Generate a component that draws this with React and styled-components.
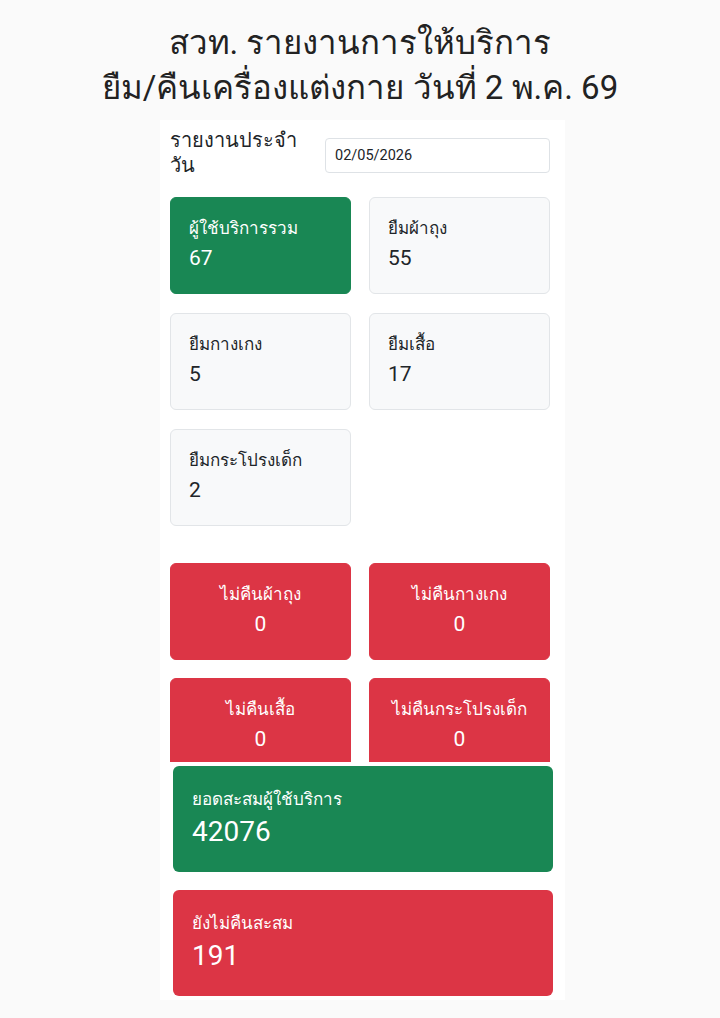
import React from "react";
import styled, { createGlobalStyle } from "styled-components";

const Global = createGlobalStyle`
  html, body { margin: 0; padding: 0; background: #fafafa; }
  body { font-family: Roboto, "Noto Sans", "DejaVu Sans", sans-serif; color: #212529; }
  * { box-sizing: border-box; }
`;

const Page = styled.div`
  width: 720px;
  min-height: 1018px;
  padding-top: 20px;
`;

const Title = styled.h1`
  margin: 0 0 10px;
  text-align: center;
  font-weight: 400;
  font-size: 33px;
  line-height: 45px;
  color: #222;
`;

const Panel = styled.div`
  width: 405px;
  margin-left: 160px;
  background: #fff;
`;

const TopSection = styled.div`
  height: 642px;
  overflow: hidden;
  padding: 5px 15px 0 10px;
`;

const HeaderRow = styled.div`
  display: flex;
  align-items: center;
  justify-content: space-between;
  height: 55px;
`;

const HeaderLabel = styled.div`
  font-size: 20px;
  line-height: 25px;
  color: #212529;
`;

const DateInput = styled.div`
  width: 225px;
  height: 35px;
  margin-top: 6px;
  border: 1px solid #dee2e6;
  border-radius: 4px;
  padding: 0 9px;
  display: flex;
  align-items: center;
  font-size: 14.5px;
  color: #212529;
`;

const Grid = styled.div`
  display: grid;
  grid-template-columns: 181px 181px;
  column-gap: 18px;
  row-gap: ${(p) => p.$rowGap || 19}px;
  margin-top: ${(p) => p.$top || 0}px;
`;

const variants = {
  success: { bg: "#198754", fg: "#fff", border: "#198754" },
  light: { bg: "#f8f9fa", fg: "#212529", border: "#e2e5e8" },
  danger: { bg: "#dc3545", fg: "#fff", border: "#dc3545" },
};

const Card = styled.div`
  height: 97px;
  border-radius: 6px;
  background: ${(p) => variants[p.$v].bg};
  color: ${(p) => variants[p.$v].fg};
  border: 1px solid ${(p) => variants[p.$v].border};
  padding: 16px ${(p) => (p.$center ? 4 : 18)}px 0;
  text-align: ${(p) => (p.$center ? "center" : "left")};
`;

const CardLabel = styled.div`
  font-size: 17px;
  line-height: 28px;
`;

const CardValue = styled.div`
  font-size: 21px;
  line-height: 32px;
`;

const BottomSection = styled.div`
  padding: 4px 12px 4px 13px;
  display: flex;
  flex-direction: column;
  gap: 18px;
`;

const BigCard = styled.div`
  height: 106px;
  border-radius: 6px;
  background: ${(p) => variants[p.$v].bg};
  color: #fff;
  padding: 20px 19px 0;
`;

const BigLabel = styled.div`
  font-size: 17px;
  line-height: 26px;
`;

const BigValue = styled.div`
  font-size: 28px;
  line-height: 40px;
`;

const stats = [
  { v: "success", label: "ผู้ใช้บริการรวม", value: 67 },
  { v: "light", label: "ยืมผ้าถุง", value: 55 },
  { v: "light", label: "ยืมกางเกง", value: 5 },
  { v: "light", label: "ยืมเสื้อ", value: 17 },
  { v: "light", label: "ยืมกระโปรงเด็ก", value: 2 },
];

const notReturned = [
  { label: "ไม่คืนผ้าถุง", value: 0 },
  { label: "ไม่คืนกางเกง", value: 0 },
  { label: "ไม่คืนเสื้อ", value: 0 },
  { label: "ไม่คืนกระโปรงเด็ก", value: 0 },
];

export default function App() {
  return (
    <Page>
      <Global />
      <Title>
        สวท. รายงานการให้บริการ
        <br />
        ยืม/คืนเครื่องแต่งกาย วันที่ 2 พ.ค. 69
      </Title>
      <Panel>
        <TopSection>
          <HeaderRow>
            <HeaderLabel>
              รายงานประจำ
              <br />
              วัน
            </HeaderLabel>
            <DateInput>02/05/2026</DateInput>
          </HeaderRow>
          <Grid $top={17} $rowGap={19}>
            {stats.map((s) => (
              <Card key={s.label} $v={s.v}>
                <CardLabel>{s.label}</CardLabel>
                <CardValue>{s.value}</CardValue>
              </Card>
            ))}
          </Grid>
          <Grid $top={37} $rowGap={18}>
            {notReturned.map((s) => (
              <Card key={s.label} $v="danger" $center>
                <CardLabel>{s.label}</CardLabel>
                <CardValue>{s.value}</CardValue>
              </Card>
            ))}
          </Grid>
        </TopSection>
        <BottomSection>
          <BigCard $v="success">
            <BigLabel>ยอดสะสมผู้ใช้บริการ</BigLabel>
            <BigValue>42076</BigValue>
          </BigCard>
          <BigCard $v="danger">
            <BigLabel>ยังไม่คืนสะสม</BigLabel>
            <BigValue>191</BigValue>
          </BigCard>
        </BottomSection>
      </Panel>
    </Page>
  );
}
